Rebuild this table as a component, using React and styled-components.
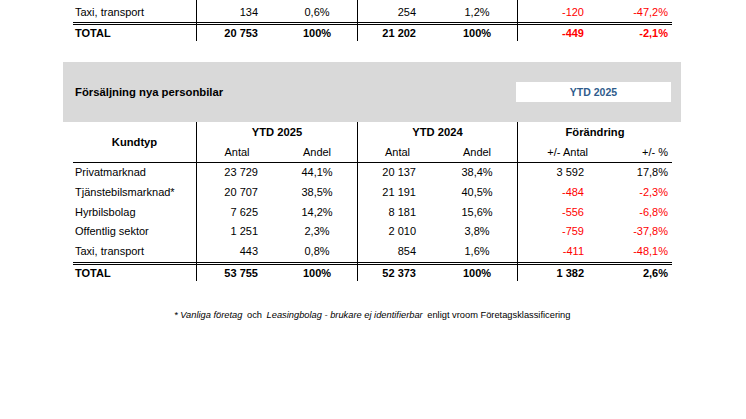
import React from "react";
import styled, { createGlobalStyle } from "styled-components";

const Global = createGlobalStyle`
  html, body { margin: 0; padding: 0; background: #fff; }
  body { font-family: "Liberation Sans", Arial, sans-serif; color: #000; }
`;

const Page = styled.div`
  width: 746px;
  height: 419px;
  overflow: hidden;
  display: flex;
  flex-direction: column;
`;

const Table = styled.table`
  margin-left: 73px;
  width: 599px;
  table-layout: fixed;
  border-collapse: separate;
  border-spacing: 0;
  font-size: 11px;
`;

const Row = styled.tr`
  & > td, & > th {
    line-height: ${(p) => p.$h || 20}px;
    padding-top: ${(p) => p.$pt || 0}px;
    ${(p) => p.$rule === "double" && "border-bottom: 3px double #000;"}
    ${(p) => p.$rule === "single" && "border-bottom: 1px solid #000;"}
  }
`;

const Cell = styled.td`
  padding: 0;
  padding-left: ${(p) => (p.$align === "left" ? 2 : 0)}px;
  padding-right: ${(p) => p.$pr || 0}px;
  text-align: ${(p) => p.$align || "right"};
  white-space: nowrap;
  font-weight: ${(p) => (p.$bold ? 700 : 400)};
  color: ${(p) => (p.$red ? "#ff0000" : "#000")};
  ${(p) => p.$divider && "border-left: 1px solid #000;"}
  vertical-align: middle;
`;

const HeadCell = styled.th`
  padding: 0;
  padding-right: ${(p) => p.$pr || 0}px;
  text-align: ${(p) => p.$align || "center"};
  white-space: nowrap;
  font-weight: ${(p) => (p.$bold ? 700 : 400)};
  font-size: ${(p) => (p.$bold ? 11.2 : 11)}px;
  ${(p) => p.$divider && "border-left: 1px solid #000;"}
  ${(p) => p.$underline && "border-bottom: 1px solid #000;"}
  vertical-align: middle;
`;

const Band = styled.div`
  margin: 21px 0 0 63px;
  width: 618px;
  height: 60px;
  background: #d9d9d9;
  display: flex;
  align-items: center;
  justify-content: space-between;
  padding: 0 10px 0 12px;
  box-sizing: border-box;
`;

const BandTitle = styled.div`
  font-weight: 700;
  font-size: 11.3px;
`;

const PeriodBox = styled.div`
  width: 155px;
  height: 20px;
  background: #fff;
  color: #2f5c8c;
  font-weight: 700;
  font-size: 10.5px;
  display: flex;
  align-items: center;
  justify-content: center;
`;

const Footnote = styled.div`
  margin-top: 28px;
  margin-left: 73px;
  width: 599px;
  text-align: center;
  font-size: 9.3px;
  line-height: 12px;
  white-space: nowrap;
`;

const Em = styled.i`
  margin: 0 2px;
`;

const Cols = () => (
  <colgroup>
    <col style={{ width: 123 }} />
    <col style={{ width: 81 }} />
    <col style={{ width: 80 }} />
    <col style={{ width: 80 }} />
    <col style={{ width: 80 }} />
    <col style={{ width: 80 }} />
    <col style={{ width: 75 }} />
  </colgroup>
);

const DataCells = ({ r, bold }) => (
  <>
    <Cell $align="left" $bold={bold}>{r[0]}</Cell>
    <Cell $divider $pr={19} $bold={bold}>{r[1]}</Cell>
    <Cell $align="center" $bold={bold}>{r[2]}</Cell>
    <Cell $divider $pr={21} $bold={bold}>{r[3]}</Cell>
    <Cell $align="center" $bold={bold}>{r[4]}</Cell>
    <Cell $divider $pr={13} $bold={bold} $red={r[5].startsWith("-")}>{r[5]}</Cell>
    <Cell $pr={4} $bold={bold} $red={r[6].startsWith("-")}>{r[6]}</Cell>
  </>
);

const rows = [
  ["Privatmarknad", "23 729", "44,1%", "20 137", "38,4%", "3 592", "17,8%"],
  ["Tjänstebilsmarknad*", "20 707", "38,5%", "21 191", "40,5%", "-484", "-2,3%"],
  ["Hyrbilsbolag", "7 625", "14,2%", "8 181", "15,6%", "-556", "-6,8%"],
  ["Offentlig sektor", "1 251", "2,3%", "2 010", "3,8%", "-759", "-37,8%"],
  ["Taxi, transport", "443", "0,8%", "854", "1,6%", "-411", "-48,1%"],
];

export default function App() {
  return (
    <>
      <Global />
      <Page>
        <Table>
          <Cols />
          <tbody>
            <Row $h={20} $pt={2} $rule="double">
              <DataCells r={["Taxi, transport", "134", "0,6%", "254", "1,2%", "-120", "-47,2%"]} />
            </Row>
            <Row $h={16}>
              <DataCells bold r={["TOTAL", "20 753", "100%", "21 202", "100%", "-449", "-2,1%"]} />
            </Row>
          </tbody>
        </Table>

        <Band>
          <BandTitle>Försäljning nya personbilar</BandTitle>
          <PeriodBox>YTD 2025</PeriodBox>
        </Band>

        <Table>
          <Cols />
          <thead>
            <Row $h={20}>
              <HeadCell rowSpan={2} $bold $underline>Kundtyp</HeadCell>
              <HeadCell colSpan={2} $bold $divider>YTD 2025</HeadCell>
              <HeadCell colSpan={2} $bold $divider>YTD 2024</HeadCell>
              <HeadCell colSpan={2} $bold $divider>Förändring</HeadCell>
            </Row>
            <Row $h={20} $rule="single">
              <HeadCell $divider>Antal</HeadCell>
              <HeadCell>Andel</HeadCell>
              <HeadCell $divider>Antal</HeadCell>
              <HeadCell>Andel</HeadCell>
              <HeadCell $divider $align="right" $pr={9}>+/- Antal</HeadCell>
              <HeadCell $align="right" $pr={4}>+/- %</HeadCell>
            </Row>
          </thead>
          <tbody>
            {rows.map((r, i) => (
              <Row key={r[0]} $h={19.8} $rule={i === rows.length - 1 ? "double" : undefined}>
                <DataCells r={r} />
              </Row>
            ))}
            <Row $h={16}>
              <DataCells bold r={["TOTAL", "53 755", "100%", "52 373", "100%", "1 382", "2,6%"]} />
            </Row>
          </tbody>
        </Table>

        <Footnote>
          *<Em>Vanliga företag</Em> och <Em>Leasingbolag - brukare ej identifierbar</Em> enligt vroom Företagsklassificering
        </Footnote>
      </Page>
    </>
  );
}
